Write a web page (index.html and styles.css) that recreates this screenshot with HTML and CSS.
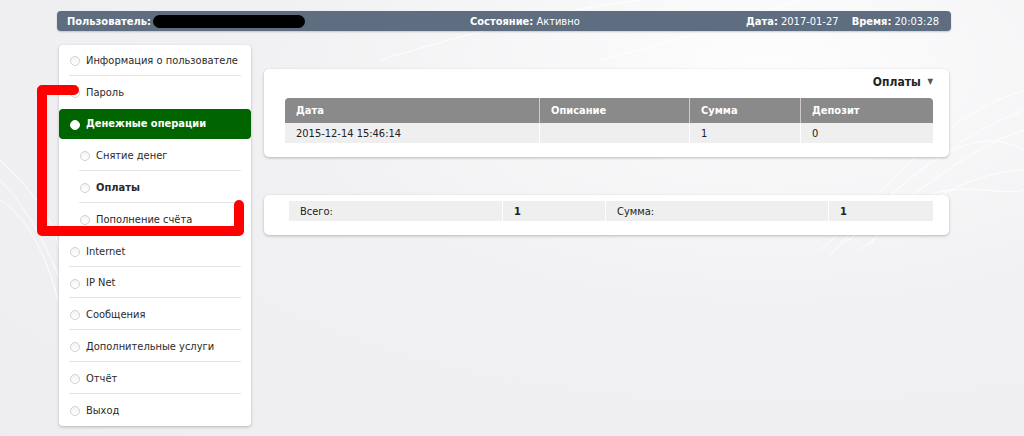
FILE: index.html
```html
<!DOCTYPE html>
<html lang="ru">
<head>
    <meta charset="UTF-8">
    <title>Оплаты</title>
    <link rel="stylesheet" href="styles.css">
</head>
<body>
    <svg class="waves" width="1024" height="436" viewBox="0 0 1024 436">
        <g fill="none" stroke="#fff" stroke-width="1" opacity="0.9">
            <path d="M820 250 C880 200 930 120 1024 90"/>
            <path d="M830 255 C890 190 950 140 1024 110"/>
            <path d="M840 245 C900 210 960 150 1024 130"/>
            <path d="M850 240 C910 170 970 120 1024 150"/>
            <path d="M860 250 C920 200 980 170 1024 170"/>
            <path d="M870 245 C930 160 990 200 1024 190"/>
            <path d="M0 180 C20 200 40 230 60 280"/>
            <path d="M0 200 C25 215 45 250 58 300"/>
            <path d="M0 160 C30 190 50 210 60 250"/>
            <path d="M380 60 C480 30 560 10 640 0"/>
            <path d="M600 60 C680 40 740 20 800 0"/>
        </g>
    </svg>
    <div class="page">
        <div class="topbar">
            <div class="user"><b>Пользователь:</b> <span class="hidden-name">&nbsp;</span></div>
            <div class="state"><b>Состояние:</b> Активно</div>
            <div class="clock"><b>Дата:</b> 2017-01-27 <b class="time-label">Время:</b> 20:03:28</div>
        </div>
        <div class="layout">
            <ul class="menu">
                <li><span class="dot"></span>Информация о пользователе</li>
                <li><span class="dot"></span>Пароль</li>
                <li class="active"><span class="dot"></span>Денежные операции</li>
                <li class="sub"><span class="dot"></span>Снятие денег</li>
                <li class="sub current"><span class="dot"></span>Оплаты</li>
                <li class="sub"><span class="dot"></span>Пополнение счёта</li>
                <li><span class="dot"></span>Internet</li>
                <li><span class="dot"></span>IP Net</li>
                <li><span class="dot"></span>Сообщения</li>
                <li><span class="dot"></span>Дополнительные услуги</li>
                <li><span class="dot"></span>Отчёт</li>
                <li><span class="dot"></span>Выход</li>
            </ul>
            <div class="content">
                <div class="panel">
                    <div class="panel-title">Оплаты <span class="caret">&#9660;</span></div>
                    <table class="grid">
                        <thead>
                            <tr>
                                <th class="c-date">Дата</th>
                                <th class="c-desc">Описание</th>
                                <th class="c-sum">Сумма</th>
                                <th>Депозит</th>
                            </tr>
                        </thead>
                        <tbody>
                            <tr>
                                <td>2015-12-14 15:46:14</td>
                                <td></td>
                                <td>1</td>
                                <td>0</td>
                            </tr>
                        </tbody>
                    </table>
                </div>
                <div class="panel totals">
                    <table class="grid">
                        <tr>
                            <td class="t-label">Всего:</td>
                            <td class="t-val"><b>1</b></td>
                            <td class="t-label2">Сумма:</td>
                            <td><b>1</b></td>
                        </tr>
                    </table>
                </div>
            </div>
        </div>
    </div>
    <svg class="marker" width="260" height="250" viewBox="0 0 260 250">
        <path d="M74 90 H42 V231 H239 V205" fill="none" stroke="#f00" stroke-width="10" stroke-linecap="round" stroke-linejoin="round"/>
    </svg>
</body>
</html>
```

FILE: styles.css
```css
body {
    position: relative;
    margin: 0;
    font-family: 'DejaVu Sans Condensed', 'DejaVu Sans', sans-serif;
    font-size: 11px;
    color: #222;
    background: radial-gradient(ellipse at 75% 15%, #fdfdfe 0%, #f1f1f3 45%, #eeeef1 100%);
    height: 436px;
    overflow: hidden;
}
.waves {
    position: absolute;
    left: 0;
    top: 0;
}
.page {
    position: relative;
    width: 894px;
    margin-left: 57px;
    padding-top: 11px;
}
.topbar {
    display: flex;
    align-items: center;
    height: 20px;
    padding: 0 12px 0 10px;
    background: #5e6d80;
    border-radius: 4px;
    color: #fff;
    box-shadow: 0 1px 2px rgba(0,0,0,0.2);
}
.topbar .user {
    width: 403px;
    display: flex;
    align-items: center;
}
.hidden-name {
    display: inline-block;
    width: 152px;
    height: 13px;
    margin-left: 2px;
    background: #000;
    border-radius: 7px;
    filter: blur(0.6px);
}
.topbar .state {
    flex: 1;
}
.time-label {
    margin-left: 10px;
}
.layout {
    display: flex;
    gap: 13px;
    margin-top: 14px;
    padding: 0 2px;
}
.menu {
    list-style: none;
    margin: 0;
    padding: 0;
    width: 192px;
    background: #fff;
    border-radius: 4px;
    box-shadow: 0 1px 3px rgba(0,0,0,0.25);
}
.menu li {
    position: relative;
    display: flex;
    align-items: center;
    height: 30.8px;
    padding-left: 27px;
    color: #2a2a2a;
}
.menu li::after {
    content: '';
    position: absolute;
    left: 10px;
    right: 10px;
    bottom: 0;
    border-bottom: 1px solid #e4e4e4;
}
.menu li + li {
    margin-top: 1px;
}
.menu li:last-child::after,
.menu li.active::after,
.menu li:has(+ .active)::after {
    display: none;
}
.menu li.sub {
    padding-left: 37px;
}
.menu li.sub::after {
    left: 20px;
}
.dot {
    position: absolute;
    left: 11px;
    top: 11px;
    width: 8px;
    height: 8px;
    border: 1px solid #d2d2d2;
    border-radius: 50%;
    background: linear-gradient(#f4f4f4, #fff);
}
.sub .dot {
    left: 21px;
}
.menu li.active {
    background: #006400;
    color: #fff;
    font-weight: bold;
    border-radius: 4px;
}
.menu li.active .dot {
    background: #fff;
    border-color: #fff;
}
.menu li.current {
    font-weight: bold;
}
.content {
    flex: 1;
    padding-top: 24px;
}
.panel {
    background: #fff;
    border-radius: 5px;
    box-shadow: 0 1px 3px rgba(0,0,0,0.25);
    padding: 6px 16px 14px 21px;
}
.panel-title {
    text-align: right;
    font-weight: bold;
    font-size: 12px;
    line-height: 14px;
    padding: 0 0 9px;
    color: #222;
}
.caret {
    font-size: 8px;
    color: #555;
    margin-left: 3px;
    vertical-align: 2px;
}
.grid {
    width: 100%;
    border-collapse: collapse;
}
.grid th {
    background: #8a8a8a;
    color: #fff;
    text-align: left;
    height: 25px;
    padding: 0 0 0 11px;
    border-right: 1px solid #ccc;
}
.grid th:first-child {
    border-top-left-radius: 4px;
}
.grid th:last-child {
    border-top-right-radius: 4px;
    border-right: none;
}
.grid td {
    background: #efefef;
    height: 20px;
    padding: 0 0 0 11px;
    border-right: 1px solid #fff;
}
.grid td:last-child {
    border-right: none;
}
.c-date { width: 243px; }
.c-desc { width: 138px; }
.c-sum { width: 99px; }
.totals {
    margin-top: 38px;
    padding-left: 25px;
}
.t-label { width: 202px; }
.t-val { width: 91px; }
.t-label2 { width: 211px; }
.marker {
    position: absolute;
    left: 0;
    top: 0;
}
```
